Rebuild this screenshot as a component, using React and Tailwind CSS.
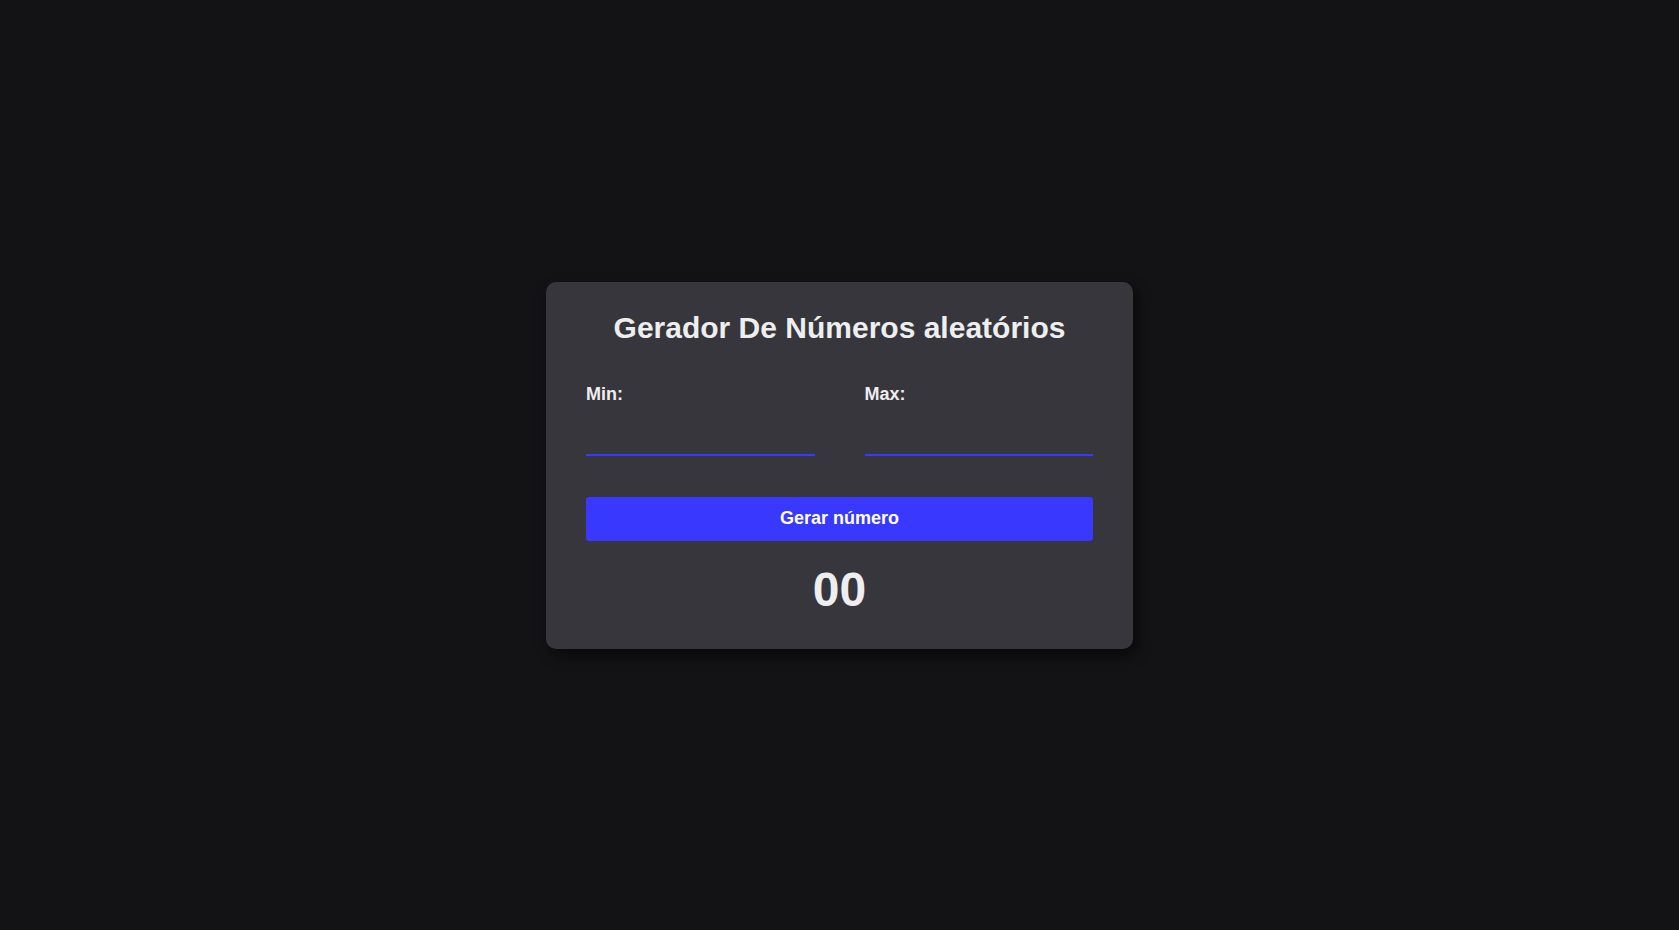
import React, { useState } from 'react'

const App = () => {
  const [min, setMin] = useState('')
  const [max, setMax] = useState('')
  const [result, setResult] = useState('00')

  // Sorteia um número entre min e max
  const handleGenerate = () => {
    const lo = parseInt(min, 10)
    const hi = parseInt(max, 10)
    if (isNaN(lo) || isNaN(hi) || hi < lo) return
    const n = Math.floor(Math.random() * (hi - lo + 1)) + lo
    setResult(String(n).padStart(2, '0'))
  }

  return (
    <div
      className="min-h-screen flex items-center justify-center bg-[#131316] text-[#eeeeee]"
      style={{ fontFamily: '"Liberation Sans", Arial, sans-serif' }}
    >
      <div className="w-[587px] bg-[#36363c] rounded-[10px] px-[40px] pt-[29px] pb-[32px] shadow-[4px_6px_14px_rgba(0,0,0,0.55)]">
        <h1 className="text-center text-[30px] leading-[34px] font-bold">
          Gerador De Números aleatórios
        </h1>

        <div className="grid grid-cols-2 gap-[50px] mt-[39px]">
          {renderField('Min:', min, setMin)}
          {renderField('Max:', max, setMax)}
        </div>

        <button
          type="button"
          onClick={handleGenerate}
          className="mt-[41px] w-full h-[44px] rounded-[3px] bg-[#3838ff] text-white text-[18px] font-bold cursor-pointer"
        >
          Gerar número
        </button>

        <p className="mt-[21px] text-center text-[48px] leading-[55px] font-bold">{result}</p>
      </div>
    </div>
  )
}

const renderField = (label, value, setValue) => (
  <div>
    <label className="block text-[18px] leading-[20px] font-bold">{label}</label>
    <input
      type="number"
      value={value}
      onChange={(e) => setValue(e.target.value)}
      className="mt-[8px] w-full h-[44px] bg-transparent border-b-2 border-[#3838ff] text-[#eeeeee] text-[18px] outline-none"
    />
  </div>
)

export default App
